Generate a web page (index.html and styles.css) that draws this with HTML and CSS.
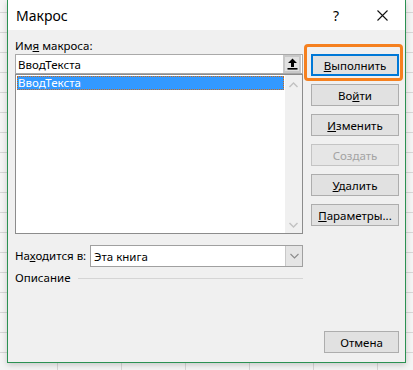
FILE: index.html
```html
<!DOCTYPE html>
<html lang="ru">
<head>
    <meta charset="UTF-8">
    <title>Макрос</title>
    <link rel="stylesheet" href="styles.css">
</head>
<body>
    <div class="dialog">
        <div class="titlebar">
            <span class="title">Макрос</span>
            <span class="help">?</span>
            <span class="close">
                <svg width="11" height="11" viewBox="0 0 11 11"><path d="M0.5 0.5L10.5 10.5M10.5 0.5L0.5 10.5" stroke="#111" stroke-width="1.1" fill="none"/></svg>
            </span>
        </div>

        <div class="panel">
            <div class="main">
                <div class="left">
                    <div class="label">Им<u>я</u> макроса:</div>
                    <div class="name-input">
                        <span class="value">ВводТекста</span>
                        <span class="pick">
                            <svg width="11" height="12" viewBox="0 0 11 12"><path d="M5.5 0.5L10 5H7V9H4V5H1Z" fill="#000"/><rect x="0.5" y="10" width="10" height="1.6" fill="#000"/></svg>
                        </span>
                    </div>
                    <div class="macro-list">
                        <div class="items">
                            <div class="item selected">ВводТекста</div>
                        </div>
                        <div class="scroll">
                            <svg width="9" height="6" viewBox="0 0 9 6"><path d="M0.5 5L4.5 1L8.5 5" stroke="#c2c2c2" stroke-width="1.4" fill="none"/></svg>
                            <svg width="9" height="6" viewBox="0 0 9 6"><path d="M0.5 1L4.5 5L8.5 1" stroke="#c2c2c2" stroke-width="1.4" fill="none"/></svg>
                        </div>
                    </div>
                    <div class="where">
                        <span class="label">На<u>х</u>одится в:</span>
                        <div class="combo">
                            <span class="value">Эта книга</span>
                            <span class="drop">
                                <svg width="9" height="6" viewBox="0 0 9 6"><path d="M0.5 1L4.5 5L8.5 1" stroke="#8a8a8a" stroke-width="1.1" fill="none"/></svg>
                            </span>
                        </div>
                    </div>
                    <div class="desc">
                        <span class="label">Описание</span>
                        <span class="rule"></span>
                    </div>
                </div>

                <div class="buttons">
                    <button class="btn default"><u>В</u>ыполнить<span class="mark"></span></button>
                    <button class="btn">Во<u>й</u>ти</button>
                    <button class="btn"><u>И</u>зменить</button>
                    <button class="btn" disabled>Создать</button>
                    <button class="btn"><u>У</u>далить</button>
                    <button class="btn"><u>П</u>араметры...</button>
                </div>
            </div>

            <div class="footer">
                <button class="btn cancel">Отмена</button>
            </div>
        </div>
    </div>
</body>
</html>
```

FILE: styles.css
```css
* {
    margin: 0;
    padding: 0;
    box-sizing: border-box;
}
:root {
    --face: #f0f0f0;
    --btn-face: #e1e1e1;
    --btn-border: #adadad;
    --field-border: #a9a9a9;
    --green: #2b9152;
    --focus: #0078d7;
    --mark: #f5801f;
}
body {
    font-family: 'Noto Sans', 'Open Sans', Arial, sans-serif;
    font-size: 11.5px;
    color: #000;
    width: 413px;
    height: 370px;
    overflow: hidden;
    padding-left: 7px;
    background-color: #f4f4f4;
    background-image:
        linear-gradient(90deg, transparent 57px, #d6d6d6 57px, #d6d6d6 58px, transparent 58px),
        linear-gradient(180deg, transparent 19px, #d6d6d6 19px, #d6d6d6 20px, transparent 20px);
    background-size: 64px 100%, 100% 20px;
    background-position: 0 0, 0 -7px;
}
u {
    text-decoration: underline;
    text-underline-offset: 1px;
}
.dialog {
    width: 399px;
    height: 363px;
    border: 1px solid var(--green);
    border-top: none;
    background: var(--face);
    display: flex;
    flex-direction: column;
    box-shadow: 0 2px 6px rgba(0, 0, 0, 0.18);
}
.titlebar {
    height: 30px;
    background: #fff;
    display: flex;
    align-items: center;
    padding: 0 0 0 8px;
}
.title {
    font-size: 14px;
    flex: 1;
}
.help {
    font-size: 14px;
    width: 14px;
    margin-right: 34px;
    text-align: center;
}
.close {
    display: flex;
    margin-right: 17px;
}
.panel {
    flex: 1;
    display: flex;
    flex-direction: column;
    padding: 8px 6px 9px 7px;
}
.main {
    display: flex;
    gap: 8px;
}
.left {
    width: 288px;
    display: flex;
    flex-direction: column;
}
.label {
    line-height: 16px;
    white-space: nowrap;
}
.name-input {
    height: 20px;
    border: 1px solid var(--field-border);
    background: #fff;
    display: flex;
    align-items: center;
    padding-left: 2px;
}
.name-input .value {
    flex: 1;
}
.pick {
    width: 18px;
    height: 18px;
    margin-right: 1px;
    background: var(--btn-face);
    border: 2px solid #c8c8c8;
    display: flex;
    align-items: center;
    justify-content: center;
}
.macro-list {
    height: 160px;
    border: 1px solid #8c8c8c;
    background: #fff;
    display: flex;
}
.items {
    flex: 1;
    padding: 1px 1px 0 1px;
}
.item {
    height: 14px;
    line-height: 13px;
    padding-left: 1px;
}
.item.selected {
    background: #3399ff;
    color: #fff;
    outline: 1px dotted #c96b1c;
    outline-offset: -1px;
}
.scroll {
    width: 17px;
    background: var(--face);
    display: flex;
    flex-direction: column;
    justify-content: space-between;
    align-items: center;
    padding: 7px 0 5px;
}
.where {
    margin-top: 11px;
    display: flex;
    align-items: center;
}
.where .label {
    width: 75px;
}
.combo {
    flex: 1;
    height: 22px;
    border: 1px solid #a0a0a0;
    background: #fff;
    display: flex;
    align-items: center;
    padding-left: 3px;
}
.combo .value {
    flex: 1;
}
.drop {
    width: 17px;
    height: 20px;
    background: #e5e5e5;
    border-left: 1px solid #c8c8c8;
    display: flex;
    align-items: center;
    justify-content: center;
}
.desc {
    margin-top: 3px;
    display: flex;
    align-items: center;
    gap: 8px;
}
.rule {
    flex: 1;
    height: 1px;
    background: #d5d5d5;
}
.buttons {
    width: 88px;
    padding-top: 16px;
    display: flex;
    flex-direction: column;
    gap: 8px;
}
.btn {
    font-family: inherit;
    font-size: 11.5px;
    color: #000;
    height: 22px;
    background: var(--btn-face);
    border: 1px solid var(--btn-border);
    position: relative;
}
.btn.default {
    border: 2px solid var(--focus);
}
.btn:disabled {
    color: #a3a3a3;
    border-color: #c4c4c4;
    background: #e6e6e6;
}
/* orange highlight drawn over the default button */
.mark {
    position: absolute;
    left: -9px;
    top: -12px;
    width: 99px;
    height: 37px;
    border: 3px solid var(--mark);
    border-radius: 4px;
}
.footer {
    margin-top: auto;
    display: flex;
    justify-content: flex-end;
}
.cancel {
    width: 75px;
}
```
